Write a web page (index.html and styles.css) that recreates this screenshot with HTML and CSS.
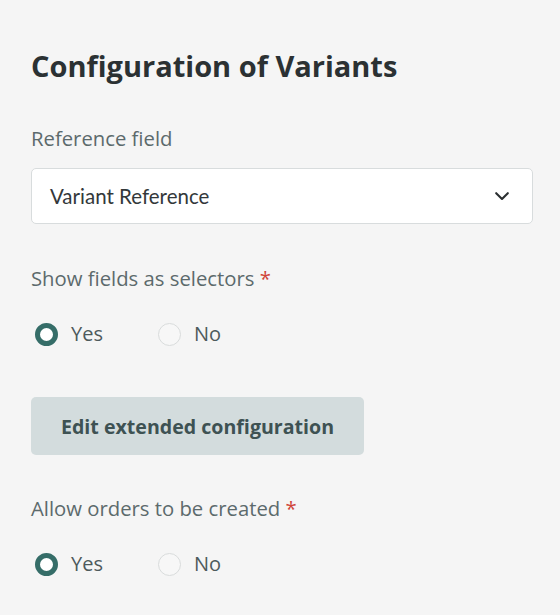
FILE: index.html
```html
<!DOCTYPE html>
<html>
<head>
<meta charset="utf-8">
<link rel="stylesheet" href="styles.css">
</head>
<body>
<div class="panel">
  <h1 class="title">Configuration of Variants</h1>

  <div class="field">
    <div class="label label-first">Reference field</div>
    <div class="select">
      <span class="select-value">Variant Reference</span>
      <svg class="chevron" width="14" height="9" viewBox="0 0 14 9"><path d="M1.2 1.2 L7 7 L12.8 1.2" fill="none" stroke="#2b2f31" stroke-width="2.1" stroke-linecap="round" stroke-linejoin="round"/></svg>
    </div>
  </div>

  <div class="field">
    <div class="label">Show fields as selectors <span class="req">*</span></div>
    <div class="radios">
      <label class="radio"><span class="dot checked"></span>Yes</label>
      <label class="radio"><span class="dot"></span>No</label>
    </div>
  </div>

  <button class="btn">Edit extended configuration</button>

  <div class="field">
    <div class="label label-after-btn">Allow orders to be created <span class="req">*</span></div>
    <div class="radios">
      <label class="radio"><span class="dot checked"></span>Yes</label>
      <label class="radio"><span class="dot"></span>No</label>
    </div>
  </div>
</div>
</body>
</html>
```

FILE: styles.css
```css
html, body {
  margin: 0;
  padding: 0;
  background: #f5f5f5;
}
body {
  font-family: "Open Sans", sans-serif;
}
.panel {
  padding: 46px 27px 0 31px;
  display: flex;
  flex-direction: column;
  align-items: flex-start;
}
.title {
  margin: 0;
  font-size: 29px;
  font-weight: 700;
  color: #2b3133;
  line-height: 40px;
}
.field {
  align-self: stretch;
}
.label {
  font-size: 20.3px;
  color: #5c6a6c;
  line-height: 28px;
  margin-top: 40px;
}
.label-first {
  margin-top: 38px;
}
.label-after-btn {
  margin-top: 39px;
}
.req {
  color: #d0453a;
}
.select {
  margin-top: 16px;
  height: 56px;
  box-sizing: border-box;
  background: #fff;
  border: 1px solid #d8dcdd;
  border-radius: 5px;
  display: flex;
  align-items: center;
  justify-content: space-between;
  padding: 0 23px 0 18px;
}
.select-value {
  font-family: "Lato", sans-serif;
  font-size: 20.5px;
  color: #33383a;
}
.radios {
  margin-top: 28px;
  display: flex;
  align-items: center;
}
.radio {
  display: flex;
  align-items: center;
  font-size: 20px;
  line-height: 28px;
  color: #4d5a5c;
  margin-right: 51px;
  margin-left: 4px;
}
.dot {
  width: 23px;
  height: 23px;
  box-sizing: border-box;
  border-radius: 50%;
  border: 1px solid #d9dcdc;
  background: #f7f7f7;
  margin-right: 13px;
}
.dot.checked {
  border: 5px solid #356d68;
  background: #fff;
}
.btn {
  margin-top: 49px;
  height: 58px;
  padding: 0 30px;
  border: none;
  border-radius: 5px;
  background: #d3dcdd;
  font-family: "Open Sans", sans-serif;
  font-weight: 700;
  font-size: 19.6px;
  color: #3e5253;
}
```
